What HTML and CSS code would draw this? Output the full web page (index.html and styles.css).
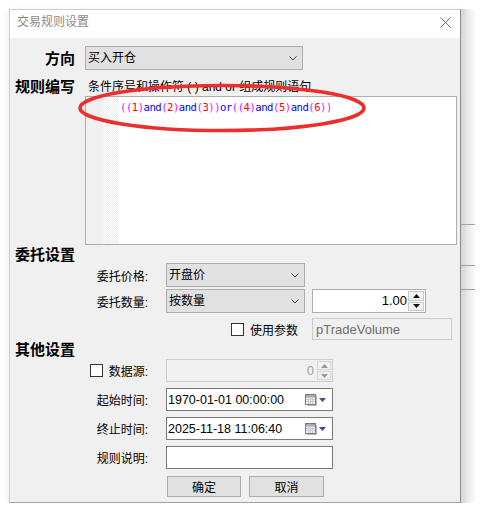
FILE: index.html
```html
<!DOCTYPE html>
<html lang="zh-CN">
<head>
<meta charset="utf-8">
<title>交易规则设置</title>
<link rel="stylesheet" href="styles.css">
</head>
<body>
<div class="stage">
  <div class="dialog">
    <div class="titlebar">
      <span class="title">交易规则设置</span>
      <svg class="close" width="11" height="11" viewBox="0 0 11 11"><path d="M0.5 0.5L10.5 10.5M10.5 0.5L0.5 10.5" stroke="#6f6f6f" stroke-width="1" fill="none"/></svg>
    </div>
    <div class="content">
      <div class="row-dir">
        <div class="head">方向</div>
        <div class="combo w218"><span>买入开仓</span><svg class="chev" width="8" height="5" viewBox="0 0 8 5"><path d="M0.5 0.5L4 4L7.5 0.5" stroke="#444" fill="none"/></svg></div>
      </div>
      <div class="rule">
        <div class="head">规则编写</div>
        <div class="rule-body">
          <div class="hint">条件序号和操作符 ( ) and or 组成规则语句</div>
          <div class="editor">
            <div class="gutter"></div>
            <div class="fold"></div>
            <div class="code"><span class="p">((</span><span class="n">1</span><span class="p">)</span><span class="k">and</span><span class="p">(</span><span class="n">2</span><span class="p">)</span><span class="k">and</span><span class="p">(</span><span class="n">3</span><span class="p">))</span><span class="k">or</span><span class="p">((</span><span class="n">4</span><span class="p">)</span><span class="k">and</span><span class="p">(</span><span class="n">5</span><span class="p">)</span><span class="k">and</span><span class="p">(</span><span class="n">6</span><span class="p">))</span></div>
          </div>
        </div>
      </div>

      <div class="section">委托设置</div>
      <div class="frow">
        <div class="lbl">委托价格:</div>
        <div class="combo w139"><span>开盘价</span><svg class="chev" width="8" height="5" viewBox="0 0 8 5"><path d="M0.5 0.5L4 4L7.5 0.5" stroke="#444" fill="none"/></svg></div>
      </div>
      <div class="frow mt2">
        <div class="lbl">委托数量:</div>
        <div class="combo w139"><span>按数量</span><svg class="chev" width="8" height="5" viewBox="0 0 8 5"><path d="M0.5 0.5L4 4L7.5 0.5" stroke="#444" fill="none"/></svg></div>
        <div class="spin">
          <div class="val">1.00</div>
          <div class="btns">
            <span><svg width="7" height="4" viewBox="0 0 7 4"><path d="M0 4L3.5 0L7 4Z" fill="#111"/></svg></span>
            <span><svg width="7" height="4" viewBox="0 0 7 4"><path d="M0 0L3.5 4L7 0Z" fill="#111"/></svg></span>
          </div>
        </div>
      </div>
      <div class="frow param">
        <div class="paramcheck"><span class="cb"></span><span>使用参数</span></div>
        <div class="field dis w140">pTradeVolume</div>
      </div>

      <div class="section">其他设置</div>
      <div class="frow h23 mt1">
        <div class="lbl"><span class="cb"></span><span>数据源:</span></div>
        <div class="spin dis-spin">
          <div class="val">0</div>
          <div class="btns">
            <span><svg width="7" height="4" viewBox="0 0 7 4"><path d="M0 4L3.5 0L7 4Z" fill="#9a9a9a"/></svg></span>
            <span><svg width="7" height="4" viewBox="0 0 7 4"><path d="M0 0L3.5 4L7 0Z" fill="#9a9a9a"/></svg></span>
          </div>
        </div>
      </div>
      <div class="frow h23 mt6">
        <div class="lbl">起始时间:</div>
        <div class="dt">
          <span class="txt">1970-01-01 00:00:00</span>
          <svg class="cal" width="13" height="12" viewBox="0 0 13 12"><rect x="2" y="2" width="10" height="10" fill="#b8b8b8"/><rect x="0.5" y="0.5" width="10" height="10" fill="#f2f2f2" stroke="#7d7d7d"/><path d="M1 3.5H10M1 5.5H10M1 7.5H10M3.5 3V10M5.5 3V10M7.5 3V10" stroke="#c9c9d2" stroke-width="1"/><rect x="1" y="1" width="9" height="2" fill="#a9a9b4"/></svg>
          <svg class="tri" width="7" height="4" viewBox="0 0 7 4"><path d="M0 0L3.5 4L7 0Z" fill="#3e5080"/></svg>
        </div>
      </div>
      <div class="frow h23 mt6">
        <div class="lbl">终止时间:</div>
        <div class="dt">
          <span class="txt">2025-11-18 11:06:40</span>
          <svg class="cal" width="13" height="12" viewBox="0 0 13 12"><rect x="2" y="2" width="10" height="10" fill="#b8b8b8"/><rect x="0.5" y="0.5" width="10" height="10" fill="#f2f2f2" stroke="#7d7d7d"/><path d="M1 3.5H10M1 5.5H10M1 7.5H10M3.5 3V10M5.5 3V10M7.5 3V10" stroke="#c9c9d2" stroke-width="1"/><rect x="1" y="1" width="9" height="2" fill="#a9a9b4"/></svg>
          <svg class="tri" width="7" height="4" viewBox="0 0 7 4"><path d="M0 0L3.5 4L7 0Z" fill="#3e5080"/></svg>
        </div>
      </div>
      <div class="frow h23 mt6">
        <div class="lbl">规则说明:</div>
        <div class="field edit w167"></div>
      </div>
      <div class="buttons">
        <div class="btn w74">确定</div>
        <div class="btn w75">取消</div>
      </div>
    </div>
  </div>
  <div class="backdrop"><i class="l1"></i><i class="l2"></i><i class="l3"></i></div>
  <svg class="annot" width="292" height="54" viewBox="0 0 292 54"><ellipse cx="145" cy="26" rx="142" ry="22.5" fill="none" stroke="#ee2d2d" stroke-width="3.6"/></svg>
</div>
</body>
</html>
```
FILE: styles.css
```css
* { box-sizing: border-box; }
html, body { margin: 0; padding: 0; background: #fff; }
body {
  font-family: "Liberation Sans", "Noto Sans CJK SC", sans-serif;
  font-size: 12px;
  color: #000;
}
.stage { position: relative; display: flex; align-items: flex-start; padding: 9px 0 0 9px; }
.dialog {
  width: 452px; height: 494px; flex: none;
  border: 1px solid #cfcfcf;
  border-right-color: #8e8e8e;
  border-bottom-color: #a4a4a4;
  background: #f0f0f0;
  box-shadow: 1px 3px 8px rgba(0,0,0,0.12);
  display: flex; flex-direction: column;
}
.titlebar {
  height: 28px; flex: none; background: #fff;
  display: flex; align-items: flex-start; justify-content: space-between;
  padding: 4px 9px 0 7px;
}
.title { color: #8a8a8a; font-size: 12px; line-height: 16px; }
.close { margin-top: 3px; }
.content { padding: 8px 0 0 5px; }

.head {
  width: 60px; flex: none; margin-right: 10px; text-align: right;
  font-size: 15px; font-weight: bold; line-height: 17px;
}
.row-dir { display: flex; align-items: center; height: 24px; }
.combo {
  height: 24px; border: 1px solid #adadad; background: #e1e1e1;
  display: flex; align-items: center; justify-content: space-between;
  padding: 0 5px 0 2px; line-height: 20px;
}
.w218 { width: 218px; }
.w139 { width: 139px; }
.w140 { width: 140px; }
.w167 { width: 167px; }
.w74 { width: 74px; }
.w75 { width: 75px; }

.rule { display: flex; margin-top: 9px; }
.rule .head { line-height: 15px; }
.rule-body { display: flex; flex-direction: column; }
.hint { line-height: 17px; padding-left: 3px; white-space: nowrap; }
.editor {
  width: 372px; height: 149px; border: 1px solid #adadad; background: #fff;
  display: flex;
}
.gutter { width: 17px; background: #f0f0f0; }
.fold { width: 16px; background: repeating-conic-gradient(#ececec 0 25%, #ffffff 0 50%) 0 0 / 2px 2px; }
.code {
  padding: 3px 0 0 1px; white-space: pre;
  font-family: "DejaVu Sans Mono", monospace; font-size: 10.6px; line-height: 14px;
  letter-spacing: -0.5px;
}
.code .p { color: #ff00ff; }
.code .n { color: #ff0000; }
.code .k { color: #0000ff; }

.section { font-size: 15px; font-weight: bold; line-height: 17px; margin-top: 1px; }
.frow { display: flex; align-items: center; height: 24px; }
.h23 { height: 23px; }
.mt1 { margin-top: 1px; }
.mt2 { margin-top: 2px; }
.mt6 { margin-top: 6px; }
.lbl {
  width: 133px; flex: none; margin-right: 18px;
  display: flex; justify-content: flex-end; align-items: center; gap: 6px;
  white-space: nowrap;
}
.cb { width: 13px; height: 13px; border: 1px solid #333; background: #fff; display: inline-block; flex: none; }

.spin {
  width: 114px; height: 24px; margin-left: 7px; border: 1px solid #adadad; background: #fff;
  display: flex;
}
.spin .val { flex: 1; text-align: right; padding-right: 1px; font-size: 13px; line-height: 22px; }
.spin .btns { width: 17px; display: flex; flex-direction: column; gap: 1px; padding: 1px 1px 1px 0; }
.spin .btns span {
  flex: 1; border: 1px solid #c8c8c8; background: #f4f4f4;
  display: flex; align-items: center; justify-content: center;
}
.dis-spin { width: 167px; height: 23px; margin-left: 0; border-color: #cccccc; background: #f0f0f0; }
.dis-spin .val { color: #a0a0a0; line-height: 21px; padding-right: 3px; }
.dis-spin .btns { width: 15px; }
.dis-spin .btns span { border-color: #d6d6d6; background: #f0f0f0; }

.param { height: 22px; margin-top: 5px; padding-left: 216px; }
.paramcheck { width: 81px; display: flex; align-items: center; gap: 6px; }
.field { height: 100%; display: flex; align-items: center; padding-left: 3px; font-size: 13px; }
.dis { border: 1px solid #cccccc; background: #f0f0f0; color: #6d6d6d; }
.edit { border: 1px solid #7a7a7a; background: #fff; }

.dt {
  width: 167px; height: 23px; border: 1px solid #7a7a7a; background: #fff;
  display: flex; align-items: center; padding: 0 6px 0 1px;
}
.dt .txt { flex: 1; font-size: 12.5px; }
.dt .cal { margin-right: 1px; }

.buttons { display: flex; gap: 8px; margin-top: 7px; padding-left: 152px; }
.btn {
  height: 21px; border: 1px solid #adadad; background: #e1e1e1;
  display: flex; align-items: center; justify-content: center;
}

.backdrop {
  width: 14px; height: 494px; flex: none;
  background: linear-gradient(to right, #d4d4d4, #ececec 55%, #fbfbfb);
  display: flex; flex-direction: column;
}
.backdrop i { display: block; height: 1px; background: #a2a2a2; }
.backdrop .l1 { margin-top: 215px; }
.backdrop .l2 { margin-top: 40px; }
.backdrop .l3 { margin-top: 23px; }

.annot { position: absolute; left: 77px; top: 82px; }
```
